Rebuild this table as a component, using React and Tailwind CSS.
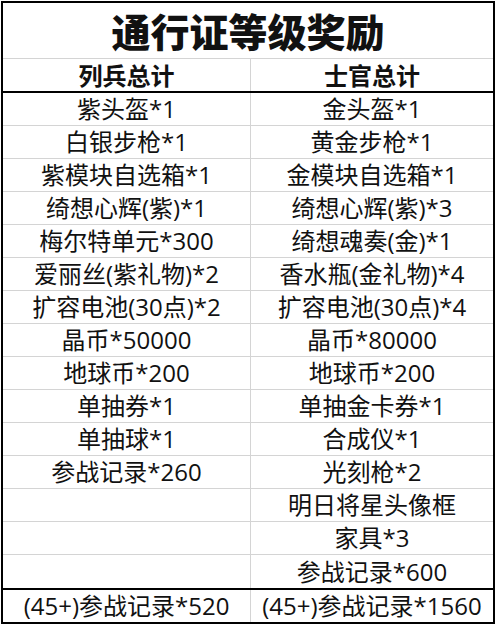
import React from "react";

const rows = [
  ["紫头盔*1", "金头盔*1"],
  ["白银步枪*1", "黄金步枪*1"],
  ["紫模块自选箱*1", "金模块自选箱*1"],
  ["绮想心辉(紫)*1", "绮想心辉(紫)*3"],
  ["梅尔特单元*300", "绮想魂奏(金)*1"],
  ["爱丽丝(紫礼物)*2", "香水瓶(金礼物)*4"],
  ["扩容电池(30点)*2", "扩容电池(30点)*4"],
  ["晶币*50000", "晶币*80000"],
  ["地球币*200", "地球币*200"],
  ["单抽券*1", "单抽金卡券*1"],
  ["单抽球*1", "合成仪*1"],
  ["参战记录*260", "光刻枪*2"],
  ["", "明日将星头像框"],
  ["", "家具*3"],
  ["", "参战记录*600"],
];

const font = { fontFamily: '"Open Sans","Noto Sans CJK SC",sans-serif' };
const cjkBold = { fontFamily: '"Noto Sans CJK SC",sans-serif', fontWeight: 700 };

export default function App() {
  return (
    <div className="w-[497px] h-[624px] bg-white relative" style={font}>
      <div className="absolute left-[1px] top-[1px] w-[494px] h-[623px] border-2 border-black flex flex-col text-[#111]">
        <div className="h-[56px] border-b border-[#d4d4d4] flex items-center justify-center">
          <span className="text-[39px] font-bold leading-none" style={{ fontFamily: '"Noto Sans CJK SC",sans-serif', fontWeight: 900 }}>
            通行证等级奖励
          </span>
        </div>
        <div className="h-[34px] border-b-2 border-black flex">
          <div className="w-[248px] border-r border-[#d4d4d4] flex items-center justify-center text-[24px] leading-none" style={cjkBold}>
            列兵总计
          </div>
          <div className="flex-1 flex items-center justify-center text-[24px] leading-none" style={cjkBold}>
            士官总计
          </div>
        </div>
        <div className="flex flex-col">
          {rows.map((r, i) => (
            <div
              key={i}
              className={
                i < rows.length - 1
                  ? "h-[33px] border-b border-[#d4d4d4] flex"
                  : "h-[33px] flex"
              }
            >
              <div className="w-[248px] border-r border-[#d4d4d4] flex items-center justify-center text-[24px] leading-none whitespace-nowrap">
                {r[0]}
              </div>
              <div className="flex-1 flex items-center justify-center text-[24px] leading-none whitespace-nowrap">
                {r[1]}
              </div>
            </div>
          ))}
        </div>
        <div className="flex-1 border-t-2 border-black flex">
          <div className="w-[248px] border-r border-[#d4d4d4] flex items-center justify-center text-[24px] leading-none whitespace-nowrap">
            (45+)参战记录*520
          </div>
          <div className="flex-1 flex items-center justify-center text-[24px] leading-none whitespace-nowrap">
            (45+)参战记录*1560
          </div>
        </div>
      </div>
    </div>
  );
}
